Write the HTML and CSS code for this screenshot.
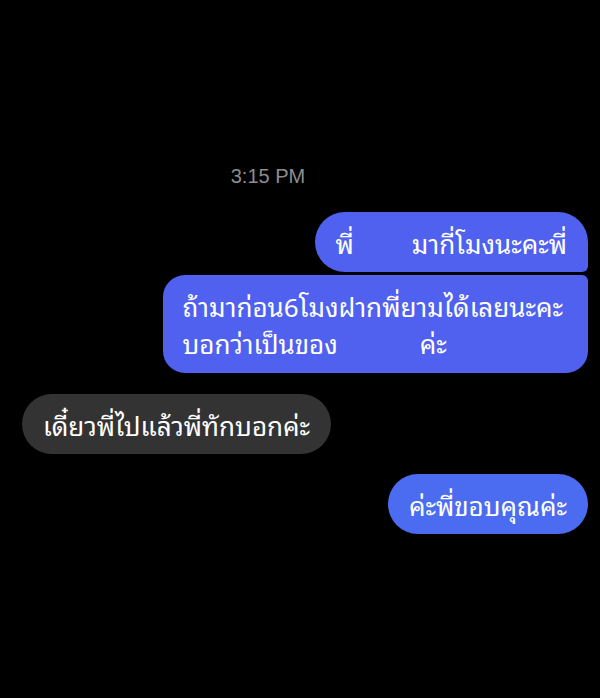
FILE: index.html
```html
<!DOCTYPE html>
<html lang="th">
<head>
    <meta charset="UTF-8">
    <meta name="viewport" content="width=device-width, initial-scale=1.0">
    <title>Chat</title>
    <link rel="stylesheet" href="styles.css">
</head>
<body>
    <div class="chat">
        <div class="time">3:15 PM</div>

        <div class="group sent">
            <div class="bubble first">พี่<span class="hidden-name w1"></span>มากี่โมงนะคะพี่</div>
            <div class="bubble last">
                <div class="line">ถ้ามาก่อน6โมงฝากพี่ยามได้เลยนะคะ</div>
                <div class="line">บอกว่าเป็นของ<span class="hidden-name w2"></span>ค่ะ</div>
            </div>
        </div>

        <div class="group received">
            <div class="bubble">เดี๋ยวพี่ไปแล้วพี่ทักบอกค่ะ</div>
        </div>

        <div class="group sent">
            <div class="bubble single">ค่ะพี่ขอบคุณค่ะ</div>
        </div>
    </div>
</body>
</html>
```

FILE: styles.css
```css
* {
    box-sizing: border-box;
    margin: 0;
    padding: 0;
}

body {
    background: #000;
    font-family: "Noto Sans Thai Looped", "Noto Sans Thai", "Noto Sans", "DejaVu Sans", sans-serif;
    color: #fff;
    height: 698px;
    overflow: hidden;
}

.chat {
    display: flex;
    flex-direction: column;
    padding: 163px 12px 0 22px;
}

.time {
    text-align: center;
    padding-right: 74px;
    font-family: "Liberation Sans", Arial, sans-serif;
    font-size: 20px;
    line-height: 26px;
    color: #8d8d8d;
    margin-bottom: 23px;
}

.group {
    display: flex;
    flex-direction: column;
    gap: 3px;
}

.group.sent {
    align-items: flex-end;
}

.group.received {
    align-items: flex-start;
    margin: 21px 0 20px;
}

.bubble {
    font-size: 26px;
    line-height: 36px;
    padding: 12px 21px;
    border-radius: 30px;
    background: #333;
    white-space: nowrap;
}

.sent .bubble {
    background: #5061ef;
}

.sent .bubble.first {
    border-radius: 30px 30px 6px 30px;
}

.sent .bubble.last {
    border-radius: 22px 6px 22px 22px;
    padding: 12px 25px 12px 20px;
}

.sent .bubble.single {
    background: #4b6cf0;
}

.line {
    height: 37px;
    line-height: 37px;
}

.hidden-name {
    display: inline-block;
}

.w1 {
    width: 58px;
}

.w2 {
    width: 82px;
}
```
